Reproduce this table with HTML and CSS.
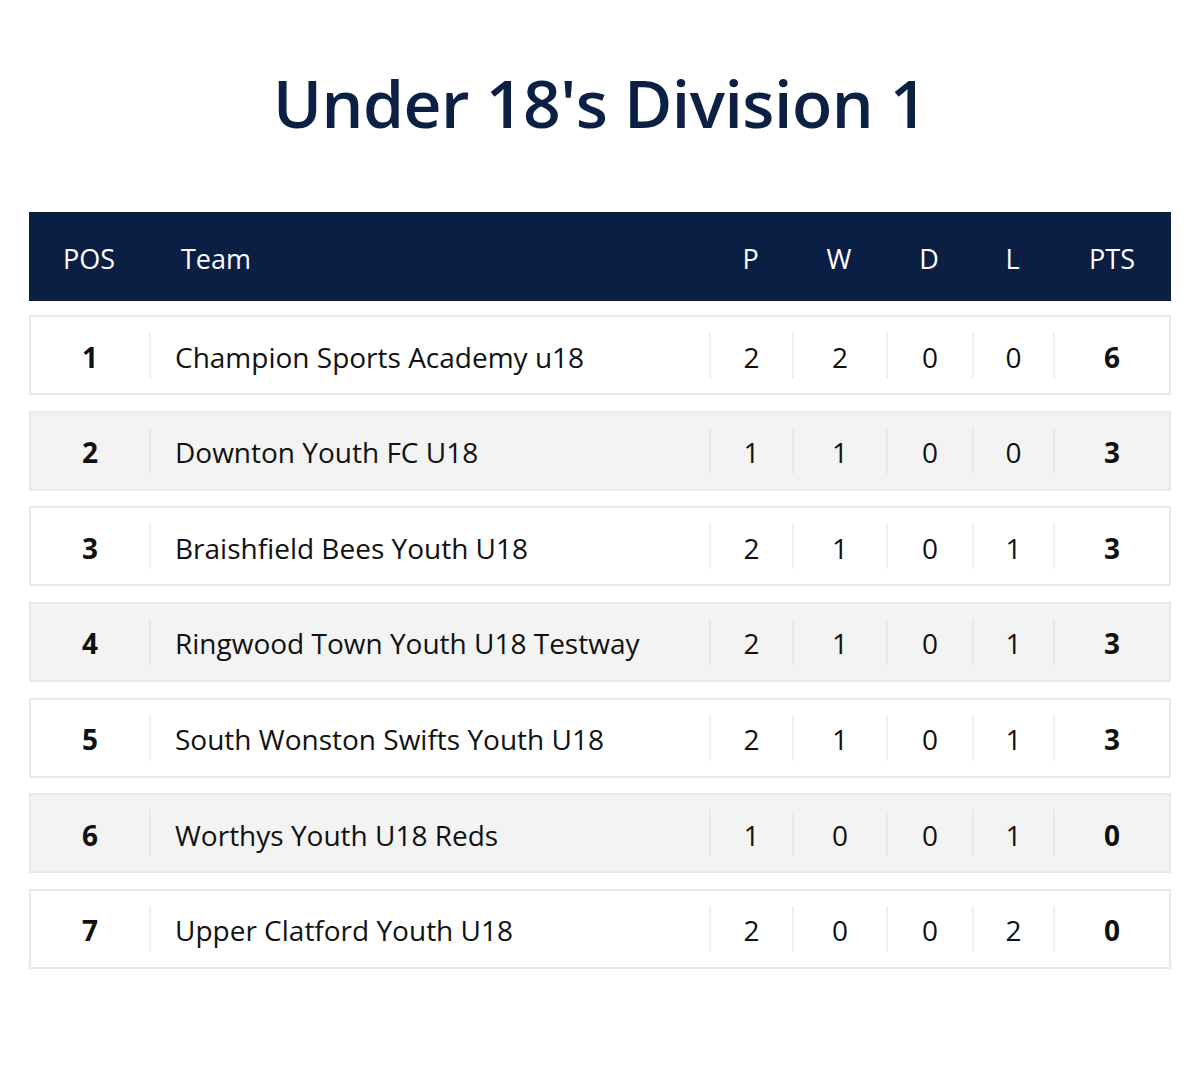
FILE: index.html
```html
<!DOCTYPE html>
<html lang="en">
<head>
<meta charset="utf-8">
<title>Under 18's Division 1</title>
<link rel="stylesheet" href="styles.css">
</head>
<body>
<main class="page">
  <h1 class="title">Under 18's Division 1</h1>
  <div class="table">
    <div class="head">
      <div class="h pos">POS</div>
      <div class="h team">Team</div>
      <div class="h">P</div>
      <div class="h">W</div>
      <div class="h">D</div>
      <div class="h">L</div>
      <div class="h">PTS</div>
    </div>
    <div class="rows">
      <div class="row">
        <div class="c pos">1</div><div class="c team">Champion Sports Academy u18</div><div class="c">2</div><div class="c">2</div><div class="c">0</div><div class="c">0</div><div class="c pts">6</div>
      </div>
      <div class="row alt">
        <div class="c pos">2</div><div class="c team">Downton Youth FC U18</div><div class="c">1</div><div class="c">1</div><div class="c">0</div><div class="c">0</div><div class="c pts">3</div>
      </div>
      <div class="row">
        <div class="c pos">3</div><div class="c team">Braishfield Bees Youth U18</div><div class="c">2</div><div class="c">1</div><div class="c">0</div><div class="c">1</div><div class="c pts">3</div>
      </div>
      <div class="row alt">
        <div class="c pos">4</div><div class="c team">Ringwood Town Youth U18 Testway</div><div class="c">2</div><div class="c">1</div><div class="c">0</div><div class="c">1</div><div class="c pts">3</div>
      </div>
      <div class="row">
        <div class="c pos">5</div><div class="c team">South Wonston Swifts Youth U18</div><div class="c">2</div><div class="c">1</div><div class="c">0</div><div class="c">1</div><div class="c pts">3</div>
      </div>
      <div class="row alt">
        <div class="c pos">6</div><div class="c team">Worthys Youth U18 Reds</div><div class="c">1</div><div class="c">0</div><div class="c">0</div><div class="c">1</div><div class="c pts">0</div>
      </div>
      <div class="row">
        <div class="c pos">7</div><div class="c team">Upper Clatford Youth U18</div><div class="c">2</div><div class="c">0</div><div class="c">0</div><div class="c">2</div><div class="c pts">0</div>
      </div>
    </div>
  </div>
</main>
</body>
</html>
```
FILE: styles.css
```css
* { box-sizing: border-box; }
html, body { margin: 0; padding: 0; background: #ffffff; }
body {
  font-family: "Open Sans", "Noto Sans", "Liberation Sans", sans-serif;
  color: #111111;
}
.page {
  padding: 60px 29px 0 29px;
}
.title {
  margin: 0;
  text-align: center;
  font-size: 66px;
  font-weight: 600;
  line-height: 84px;
  color: #0c1f45;
  letter-spacing: -0.5px;
}
.table {
  margin-top: 68px;
}
.head {
  display: grid;
  grid-template-columns: 120px 560px 83px 94px 86px 81px 118px;
  height: 89px;
  padding-top: 4px;
  background: #0b1f44;
  align-items: center;
  color: #ffffff;
  font-size: 27px;
}
.h { text-align: center; }
.h.team { text-align: left; padding-left: 32px; }
.rows {
  display: flex;
  flex-direction: column;
  gap: 15.67px;
  margin-top: 14px;
}
.row {
  display: grid;
  grid-template-columns: 118px 560px 83px 94px 86px 81px 116px;
  height: 80px;
  border: 2px solid #e9e9e9;
  background: #ffffff;
  align-items: center;
  font-size: 28px;
}
.row.alt { background: #f3f3f3; }
.c {
  height: 46px;
  padding-top: 3px;
  display: flex;
  align-items: center;
  justify-content: center;
  border-left: 2px solid #efefef;
}
.row.alt .c { border-left-color: #e9e9e9; }
.c.pos { border-left: none; font-weight: 700; }
.c.team { justify-content: flex-start; padding-left: 24px; }
.c.pts { font-weight: 700; }
```
